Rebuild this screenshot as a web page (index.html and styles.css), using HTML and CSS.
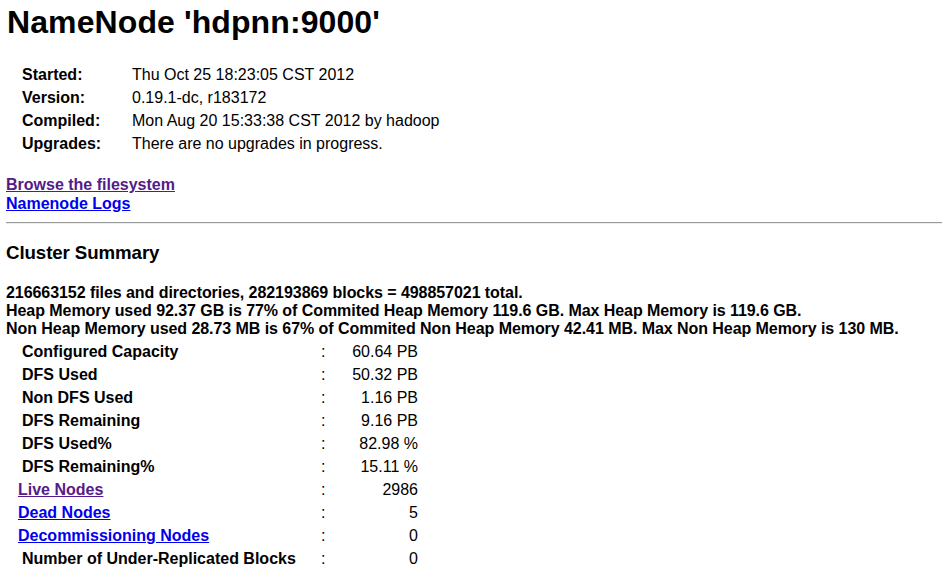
FILE: index.html
```html
<!DOCTYPE html>
<html>
<head>
<meta charset="utf-8">
<title>Hadoop NameNode hdpnn:9000</title>
<link rel="stylesheet" href="styles.css">
</head>
<body>
<div class="page">
  <h1 class="title">NameNode 'hdpnn:9000'</h1>

  <div class="info">
    <div class="info-label">Started:</div><div class="info-value">Thu Oct 25 18:23:05 CST 2012</div>
    <div class="info-label">Version:</div><div class="info-value">0.19.1-dc, r183172</div>
    <div class="info-label">Compiled:</div><div class="info-value">Mon Aug 20 15:33:38 CST 2012 by hadoop</div>
    <div class="info-label">Upgrades:</div><div class="info-value">There are no upgrades in progress.</div>
  </div>

  <div class="links">
    <a class="visited" href="#browse">Browse the filesystem</a>
    <a class="link" href="#logs">Namenode Logs</a>
  </div>

  <hr class="rule">

  <h3 class="section">Cluster Summary</h3>

  <div class="totals">
    <div>216663152 files and directories, 282193869 blocks = 498857021 total.</div>
    <div>Heap Memory used 92.37 GB is 77% of Commited Heap Memory 119.6 GB. Max Heap Memory is 119.6 GB.</div>
    <div>Non Heap Memory used 28.73 MB is 67% of Commited Non Heap Memory 42.41 MB. Max Non Heap Memory is 130 MB.</div>
  </div>

  <div class="summary">
    <div class="s-label">Configured Capacity</div><div class="s-colon">:</div><div class="s-value">60.64 PB</div>
    <div class="s-label">DFS Used</div><div class="s-colon">:</div><div class="s-value">50.32 PB</div>
    <div class="s-label">Non DFS Used</div><div class="s-colon">:</div><div class="s-value">1.16 PB</div>
    <div class="s-label">DFS Remaining</div><div class="s-colon">:</div><div class="s-value">9.16 PB</div>
    <div class="s-label">DFS Used%</div><div class="s-colon">:</div><div class="s-value">82.98 %</div>
    <div class="s-label">DFS Remaining%</div><div class="s-colon">:</div><div class="s-value">15.11 %</div>
    <div class="s-link"><a class="visited" href="#live">Live Nodes</a></div><div class="s-colon">:</div><div class="s-value">2986</div>
    <div class="s-link"><a class="link" href="#dead">Dead Nodes</a></div><div class="s-colon">:</div><div class="s-value">5</div>
    <div class="s-link"><a class="link" href="#decom">Decommissioning Nodes</a></div><div class="s-colon">:</div><div class="s-value">0</div>
    <div class="s-label">Number of Under-Replicated Blocks</div><div class="s-colon">:</div><div class="s-value">0</div>
  </div>
</div>
</body>
</html>
```
FILE: styles.css
```css
html, body {
  margin: 0;
  padding: 0;
  background: #ffffff;
}

body {
  font-family: "Liberation Sans", Arial, sans-serif;
  font-size: 16px;
  color: #000000;
}

.page {
  padding: 3px 0 0 5px;
}

.title {
  margin: 0 0 0 2px;
  font-size: 32px;
  line-height: 38px;
  font-weight: bold;
  letter-spacing: 0.1px;
}

.info {
  margin: 22px 0 0 13px;
  display: grid;
  grid-template-columns: 114px auto;
  grid-auto-rows: 23px;
  line-height: 23px;
}

.info-label {
  font-weight: bold;
  padding-left: 4px;
}

.info-value {
  white-space: nowrap;
}

.links {
  margin-top: 21px;
  padding-left: 1px;
  display: flex;
  flex-direction: column;
  align-items: flex-start;
  line-height: 18.5px;
  font-weight: bold;
}

.visited {
  color: #551a8b;
  text-decoration: underline;
}

.link {
  color: #0000ee;
  text-decoration: underline;
}

.rule {
  margin: 9px 0 0 1px;
  height: 0;
  border: 0;
  border-top: 1px solid #9a9a9a;
  border-bottom: 1px solid #eeeeee;
}

.section {
  margin: 17.5px 0 0 1px;
  font-size: 18.72px;
  line-height: 22px;
  font-weight: bold;
  letter-spacing: -0.1px;
}

.totals {
  margin-top: 20px;
  padding-left: 1px;
  font-weight: bold;
  line-height: 18.4px;
  white-space: nowrap;
  letter-spacing: -0.06px;
}

.summary {
  margin: 1.3px 0 0 13px;
  display: grid;
  grid-template-columns: 303px 19px 78px;
  grid-auto-rows: 23px;
  line-height: 23px;
  font-weight: bold;
  white-space: nowrap;
}

.s-label {
  padding-left: 4px;
}

.s-colon {
  font-weight: normal;
}

.s-value {
  font-weight: normal;
  text-align: right;
}
```
